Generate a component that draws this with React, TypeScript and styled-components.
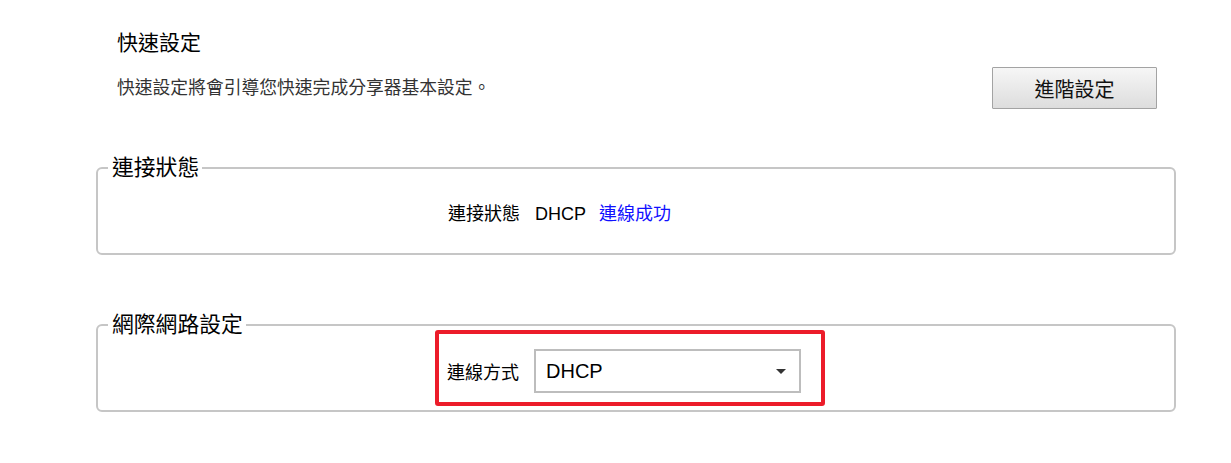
import styled, { createGlobalStyle } from 'styled-components'

const GlobalStyle = createGlobalStyle`
  body {
    margin: 0;
    background: #fff;
    font-family: "Liberation Sans", "Noto Sans CJK TC", Arial, sans-serif;
    color: #000;
  }
`

const Page = styled.div`
  width: 1080px;
  margin-left: 96px;
  padding-top: 28px;
`

const Header = styled.div`
  padding: 0 19px 0 21px;
`

const Title = styled.h1`
  margin: 0;
  font-size: 21px;
  font-weight: normal;
  line-height: 30px;
`

const Intro = styled.div`
  margin-top: 9px;
  display: flex;
  align-items: center;
  justify-content: space-between;
`

const Description = styled.p`
  margin: 0;
  font-size: 17.8px;
  line-height: 24px;
  color: #333;
`

const Button = styled.button`
  width: 165px;
  height: 42px;
  border: 1px solid #a3a3a3;
  border-radius: 1px;
  background: linear-gradient(#f6f6f6, #dddddd);
  font-family: inherit;
  font-size: 20px;
  color: #111;
  cursor: pointer;
`

const Fieldset = styled.fieldset<{ $top: number; $bottom: number }>`
  margin: ${(p) => p.$top}px 0 0;
  padding: 0 10px ${(p) => p.$bottom}px;
  border: 2px solid #c6c6c6;
  border-radius: 6px;
  min-width: 0;
`

const Legend = styled.legend`
  padding: 0 3px 0 4px;
  font-size: 21.8px;
  line-height: 22px;
`

const Row = styled.div`
  display: flex;
  align-items: center;
  margin: 23px 0 0 340px;
  font-size: 18px;
  line-height: 24px;
`

const Label = styled.span`
  margin-right: 15px;
`

const Value = styled.span<{ $link?: boolean }>`
  margin-right: 13px;
  color: ${(p) => (p.$link ? '#1010ff' : '#000')};
`

const Highlight = styled.div`
  display: inline-flex;
  align-items: center;
  margin: -6px 0 0 327px;
  padding: 15px 20px 9px 8px;
  border: 4px solid #ec1c2a;
  border-radius: 3px;
  font-size: 18px;
`

const SelectBox = styled.div`
  box-sizing: border-box;
  width: 267px;
  height: 44px;
  display: flex;
  align-items: center;
  justify-content: space-between;
  padding: 0 13px 0 10px;
  border: 2px solid #bdbdbd;
  background: #fff;
  font-size: 20px;
`

export default function App() {
  return (
    <>
      <GlobalStyle />
      <Page>
        <Header>
          <Title>快速設定</Title>
          <Intro>
            <Description>快速設定將會引導您快速完成分享器基本設定。</Description>
            <Button>進階設定</Button>
          </Intro>
        </Header>

        <Fieldset $top={48} $bottom={27}>
          <Legend>連接狀態</Legend>
          <Row>
            <Label>連接狀態</Label>
            <Value>DHCP</Value>
            <Value $link>連線成功</Value>
          </Row>
        </Fieldset>

        <Fieldset $top={59} $bottom={4}>
          <Legend>網際網路設定</Legend>
          <Highlight>
            <Label>連線方式</Label>
            <SelectBox>
              <span>DHCP</span>
              <svg width="10" height="5" viewBox="0 0 10 5">
                <path d="M0 0 H10 L5 5 Z" fill="#333" />
              </svg>
            </SelectBox>
          </Highlight>
        </Fieldset>
      </Page>
    </>
  )
}
